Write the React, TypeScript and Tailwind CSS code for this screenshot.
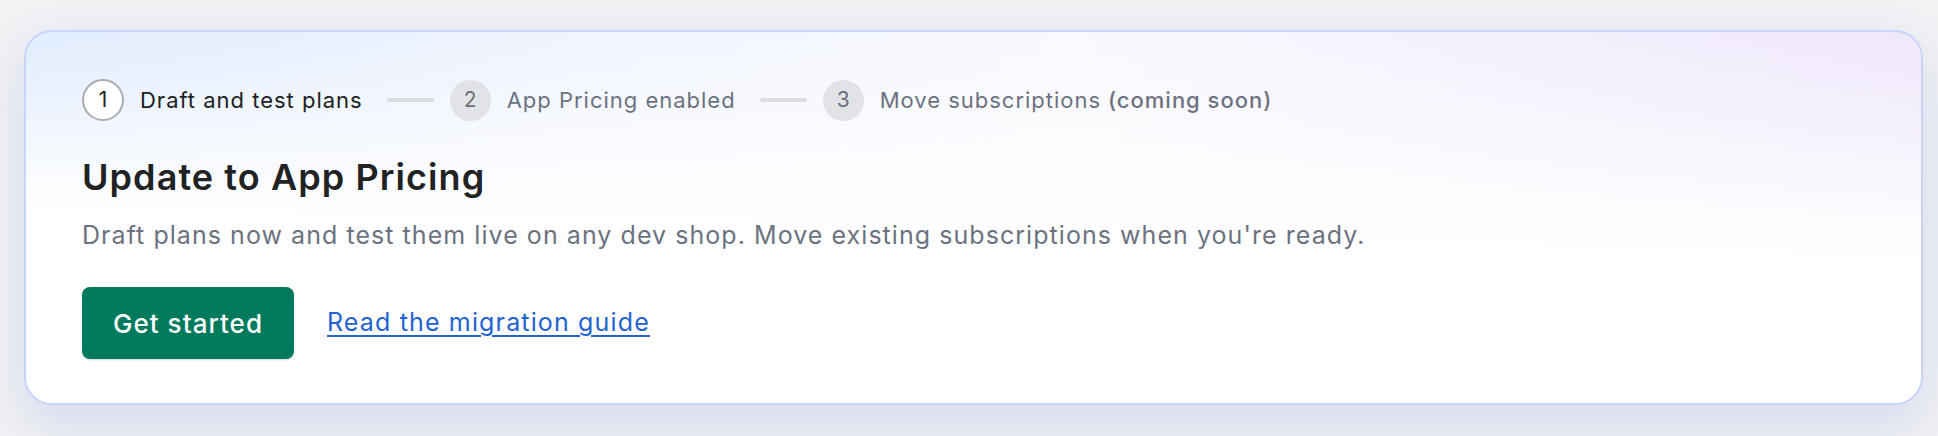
import React from "react";

type Step = {
  n: number;
  label: string;
  note?: string;
  active?: boolean;
};

const steps: Step[] = [
  { n: 1, label: "Draft and test plans", active: true },
  { n: 2, label: "App Pricing enabled" },
  { n: 3, label: "Move subscriptions", note: "(coming soon)" },
];

const StepItem = ({ step }: { step: Step }) => (
  <div className="flex items-center gap-4">
    {step.active ? (
      <div className="flex h-[42px] w-[42px] items-center justify-center rounded-full border-2 border-[#a9acb1] bg-white text-[21px] text-[#202223]">
        {step.n}
      </div>
    ) : (
      <div className="flex h-[41px] w-[41px] items-center justify-center rounded-full bg-[#e2e3e6] text-[21px] text-[#6b707a]">
        {step.n}
      </div>
    )}
    <span
      className={
        step.active
          ? "text-[22px] tracking-[0.045em] text-[#202223]"
          : "text-[22px] tracking-[0.045em] text-[#6b7280]"
      }
    >
      {step.label}
      {step.note && <span className="font-medium"> {step.note}</span>}
    </span>
  </div>
);

const App = () => {
  return (
    <div
      className="min-h-[436px] w-full bg-[#f1f2f4] pt-[30px] pb-[33px] pl-[24px] pr-[15px]"
      style={{ fontFamily: "Inter, 'Noto Sans', sans-serif" }}
    >
      <div className="rounded-[28px] border-2 border-[#c8d5fb] bg-white bg-[image:linear-gradient(181.5deg,rgba(255,255,255,0)_0%,rgba(255,255,255,0.35)_20%,#ffffff_54%),linear-gradient(90deg,#d9e7fd_0%,#eef3fe_30%,#f8f8fe_55%,#efe7fb_100%)] px-[56px] pt-[47px] pb-[44px] shadow-[0_20px_50px_rgba(100,118,210,0.2)]">
        <div className="flex items-center">
          {steps.map((s, i) => (
            <React.Fragment key={s.n}>
              {i > 0 && (
                <div className="ml-[24px] mr-[16px] h-[4px] w-[47px] rounded-full bg-[#dcdde1]" />
              )}
              <StepItem step={s} />
            </React.Fragment>
          ))}
        </div>

        <h1 className="mt-[32px] text-[36px] font-semibold leading-[48px] tracking-[0.03em] text-[#202223]">
          Update to App Pricing
        </h1>
        <p className="mt-[18px] text-[25px] leading-[32px] tracking-[0.042em] text-[#6b7280]">
          Draft plans now and test them live on any dev shop. Move existing
          subscriptions when you're ready.
        </p>

        <div className="mt-[36px] flex items-center gap-[33px]">
          <button className="h-[72px] w-[212px] rounded-[8px] bg-[#007a5c] text-[26px] font-medium tracking-[0.04em] text-white shadow-[0_1px_2px_rgba(0,0,0,0.15)]">
            Get started
          </button>
          <a
            href="#"
            className="text-[25px] tracking-[0.046em] text-[#2463d1] underline underline-offset-[4px]"
          >
            Read the migration guide
          </a>
        </div>
      </div>
    </div>
  );
};

export default App;
